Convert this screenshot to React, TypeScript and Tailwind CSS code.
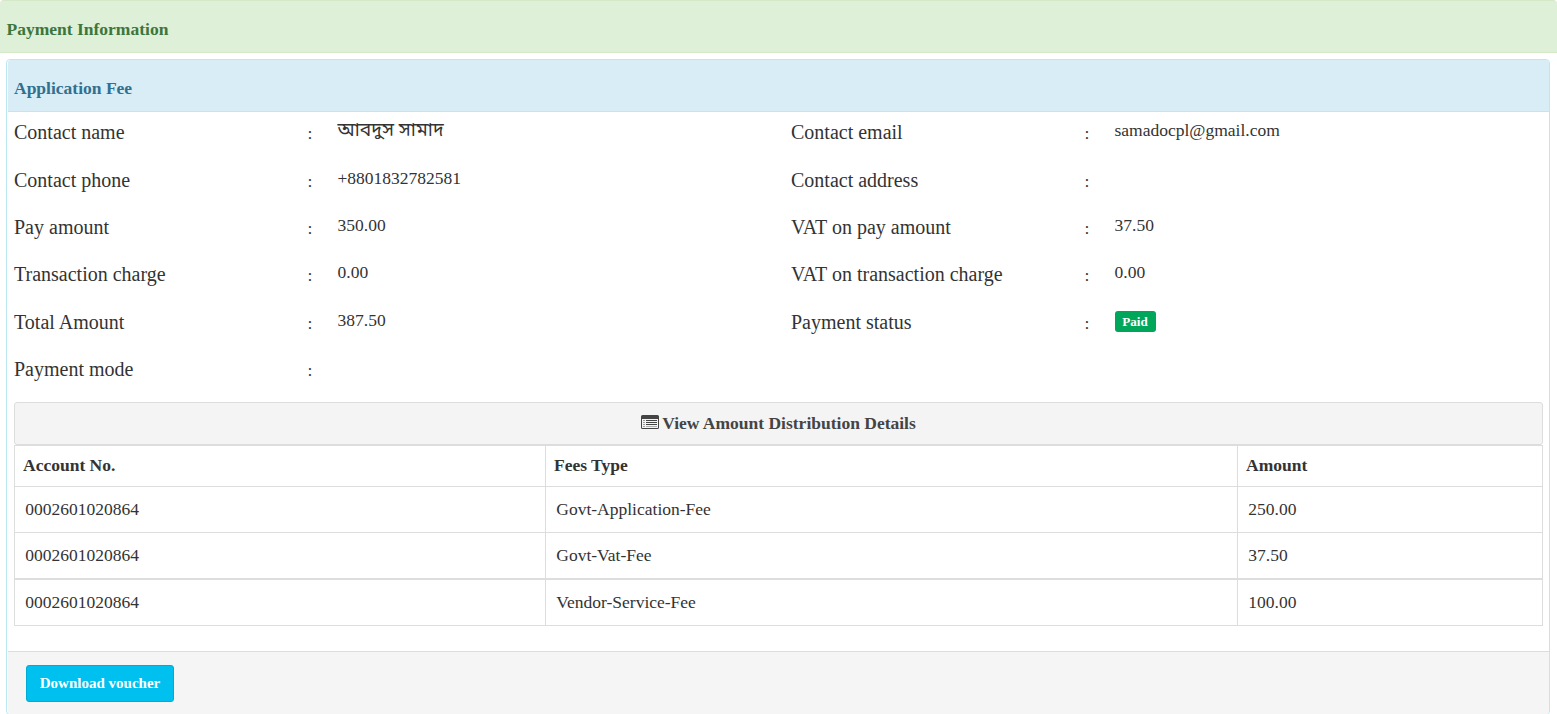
import type { ReactNode } from "react";

type Field = { label: string; value?: ReactNode; bengali?: boolean };

const left: Field[] = [
  { label: "Contact name", value: "আবদুস সামাদ", bengali: true },
  { label: "Contact phone", value: "+8801832782581" },
  { label: "Pay amount", value: "350.00" },
  { label: "Transaction charge", value: "0.00" },
  { label: "Total Amount", value: "387.50" },
  { label: "Payment mode" },
];

const right: Field[] = [
  { label: "Contact email", value: "samadocpl@gmail.com" },
  { label: "Contact address" },
  { label: "VAT on pay amount", value: "37.50" },
  { label: "VAT on transaction charge", value: "0.00" },
  {
    label: "Payment status",
    value: (
      <span className="mt-[3px] block h-[21px] w-[41px] rounded-[3px] bg-[#00a65a] text-center text-[13.125px] leading-[21px] font-bold text-white">
        Paid
      </span>
    ),
  },
];

const fees = [
  ["0002601020864", "Govt-Application-Fee", "250.00"],
  ["0002601020864", "Govt-Vat-Fee", "37.50"],
  ["0002601020864", "Vendor-Service-Fee", "100.00"],
];

const rowStyles = ["h-[46px] border-b", "h-[46px] border-b-2", "h-[47px]"];

function Fields({ items }: { items: Field[] }) {
  return (
    <dl className="w-[777px] shrink-0">
      {items.map((f, i) => (
        <div key={f.label} className={i % 3 === 0 ? "flex h-[48px]" : "flex h-[47px]"}>
          <dt className="flex w-[323.5px] pt-[6px] text-[20px] leading-[28px]">
            <span className="w-[293.5px]">{f.label}</span>
            <span className="pt-px text-[17.5px]">:</span>
          </dt>
          <dd className={f.bengali ? "pt-[5px] text-[19.3px] leading-[25px]" : "pt-[6px] text-[17.5px] leading-[25px]"}>
            {f.value}
          </dd>
        </div>
      ))}
    </dl>
  );
}

function ListIcon() {
  return (
    <svg className="mr-[3px] mb-[3px] h-[14px] w-[18px]" viewBox="0 0 18 14" fill="currentColor" aria-hidden="true">
      <path
        fillRule="evenodd"
        d="M1.5 0h15A1.5 1.5 0 0 1 18 1.5v11a1.5 1.5 0 0 1-1.5 1.5h-15A1.5 1.5 0 0 1 0 12.5v-11A1.5 1.5 0 0 1 1.5 0zM1 4v8.5a.5.5 0 0 0 .5.5h15a.5.5 0 0 0 .5-.5V4z"
      />
      <path d="M2.5 5h1v1h-1zM2.5 7h1v1h-1zM2.5 9h1v1h-1zM2.5 11h1v1h-1zM5 5h11v1H5zM5 7h11v1H5zM5 9h11v1H5z" />
      <path d="M5 11h11v1H5z" opacity=".4" />
    </svg>
  );
}

export default function App() {
  return (
    <main className="h-[714px] w-[1557px] overflow-hidden bg-white font-['Liberation_Serif','Noto_Sans_Bengali',serif] text-[17.5px] text-[#333]">
      <header className="h-[53px] rounded-t-[4px] border-y border-[#d6e9c6] bg-[#dff0d8] pt-[16px] pl-[6.5px] leading-[25px] font-bold text-[#3c763d]">
        Payment Information
      </header>
      <section className="mt-[6px] ml-[6px] flex h-[656px] w-[1544px] flex-col rounded-[4px] border border-[#bce8f1]">
        <h2 className="ml-px h-[52px] shrink-0 rounded-t-[3px] border-b border-[#bce8f1] bg-[#d9edf7] pt-[16px] pl-[6px] leading-[25px] font-bold text-[#31708f]">
          Application Fee
        </h2>
        <div className="flex h-[290px] shrink-0 pl-[7px]">
          <Fields items={left} />
          <Fields items={right} />
        </div>
        <div className="mx-[7px] shrink-0">
          <button className="flex h-[43px] w-[1529px] items-center justify-center rounded-[3px] border border-[#ddd] bg-[#f4f4f4] font-bold text-[#444]">
            <ListIcon />
            <span>View Amount Distribution Details</span>
          </button>
          <table className="w-[1529px] table-fixed border-collapse border border-[#ddd]">
            <colgroup>
              <col className="w-[531px]" />
              <col className="w-[692px]" />
              <col />
            </colgroup>
            <thead>
              <tr className="h-[41px] border-b border-[#ddd] text-left">
                <th className="border-r border-[#ddd] p-0 pb-[2px] pl-[8px]">Account No.</th>
                <th className="border-r border-[#ddd] p-0 pb-[2px] pl-[8px]">Fees Type</th>
                <th className="p-0 pb-[2px] pl-[8px]">Amount</th>
              </tr>
            </thead>
            <tbody>
              {fees.map((row, i) => (
                <tr key={row[1]} className={`${rowStyles[i]} border-[#ddd]`}>
                  {row.map((cell, j) => (
                    <td key={j} className="border-r border-[#ddd] p-0 pl-[10.3px]">
                      {cell}
                    </td>
                  ))}
                </tr>
              ))}
            </tbody>
          </table>
        </div>
        <footer className="mt-[25px] ml-px grow rounded-b-[3px] border-t border-[#ddd] bg-[#f5f5f5] pt-[13px] pl-[18px]">
          <button className="block h-[37px] w-[148px] rounded-[3px] border border-[#00acd6] bg-[#00c0ef] text-[15px] font-bold text-white">
            Download voucher
          </button>
        </footer>
      </section>
    </main>
  );
}
